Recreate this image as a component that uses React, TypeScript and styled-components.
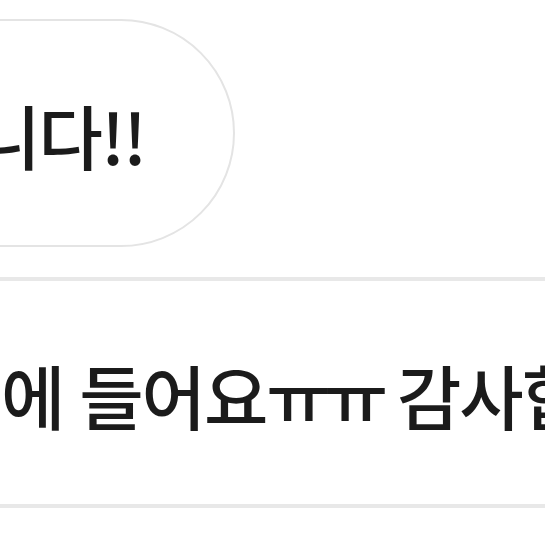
import styled, { createGlobalStyle } from "styled-components";

const GlobalStyle = createGlobalStyle`
  html, body {
    margin: 0;
    padding: 0;
    background: #ffffff;
  }
  body {
    font-family: "Noto Sans CJK KR", "Noto Sans", sans-serif;
    color: #1b1b1b;
  }
`;

const Screen = styled.div`
  width: 545px;
  height: 545px;
  overflow: hidden;
  display: flex;
  flex-direction: column;
  padding-top: 19px;
  box-sizing: border-box;
`;

const BubbleRow = styled.div`
  width: 235px;
  display: flex;
  justify-content: flex-end;
`;

const Bubble = styled.div`
  flex-shrink: 0;
  height: 228px;
  box-sizing: border-box;
  border: 2px solid #e4e4e4;
  border-radius: 114px;
  padding: 4px 88px 0 60px;
  display: flex;
  align-items: center;
  white-space: nowrap;
`;

const Text = styled.span`
  font-size: 70px;
  font-weight: 500;
  letter-spacing: -2px;
  word-spacing: 2px;
  line-height: 1;
`;

const Tears = styled.span`
  letter-spacing: -7px;
`;

const Card = styled.div`
  margin-top: 30px;
  margin-left: -20px;
  height: 231px;
  box-sizing: border-box;
  border-top: 4px solid #e8e8e8;
  border-bottom: 4px solid #e8e8e8;
  display: flex;
  align-items: center;
  padding: 4px 0 0 21px;
  white-space: nowrap;
`;

function App() {
  return (
    <>
      <GlobalStyle />
      <Screen>
        <BubbleRow>
          <Bubble>
            <Text>감사합니다!!</Text>
          </Bubble>
        </BubbleRow>
        <Card>
          <Text>
            에 들어요<Tears>ㅠㅠ</Tears> 감사합니다
          </Text>
        </Card>
      </Screen>
    </>
  );
}

export default App;
